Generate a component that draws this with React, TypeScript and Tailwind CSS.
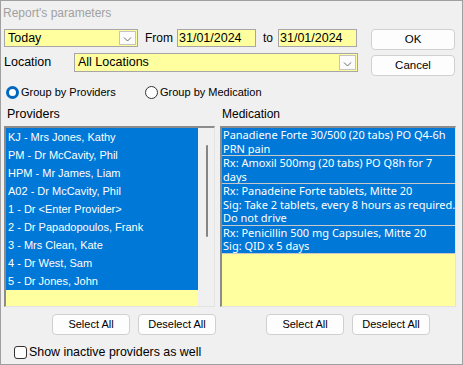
import React from "react";

const providers = [
  "KJ - Mrs Jones, Kathy",
  "PM - Dr McCavity, Phil",
  "HPM - Mr James, Liam",
  "A02 - Dr McCavity, Phil",
  "1 - Dr <Enter Provider>",
  "2 - Dr Papadopoulos, Frank",
  "3 - Mrs Clean, Kate",
  "4 - Dr West, Sam",
  "5 - Dr Jones, John",
];

const medications = [
  ["Panadiene Forte 30/500 (20 tabs) PO Q4-6h", "PRN pain"],
  ["Rx: Amoxil 500mg (20 tabs) PO Q8h for 7", "days"],
  [
    "Rx: Panadeine Forte tablets, Mitte 20",
    "Sig: Take 2 tablets, every 8 hours as required.",
    "Do not drive",
  ],
  ["Rx: Penicillin 500 mg Capsules, Mitte 20", "Sig: QID x 5 days"],
];

const Chevron = () => (
  <svg width="9" height="6" viewBox="0 0 9 6">
    <path d="M1 1.5 L4.5 5 L8 1.5" fill="none" stroke="#6b6b6b" strokeWidth="1" />
  </svg>
);

const Combo = ({ text, className }: { text: string; className: string }) => (
  <div className={`flex border border-[#a6a6a6] bg-[#ffffa0] ${className}`}>
    <span className="flex-1 pl-[3px] flex items-center whitespace-nowrap">{text}</span>
    <span className="w-[17px] my-px mr-px flex items-center justify-center pt-[2px] border border-[#c4c4c4] bg-[#fbfbfb]">
      <Chevron />
    </span>
  </div>
);

const DateBox = ({ value }: { value: string }) => (
  <div className="w-[79px] h-[18px] border border-[#a6a6a6] bg-[#ffffa0] pl-px flex items-center">
    {value}
  </div>
);

const Button = ({ label, className }: { label: string; className: string }) => (
  <div
    className={`flex items-center justify-center border border-[#d0d0d0] rounded-[4px] bg-[#fdfdfd] ${className}`}
  >
    {label}
  </div>
);

const Radio = ({ checked }: { checked: boolean }) => (
  <svg width="13" height="13" viewBox="0 0 13 13">
    {checked ? (
      <>
        <circle cx="6.5" cy="6.5" r="6.5" fill="#0067c0" />
        <circle cx="6.5" cy="6.5" r="3.5" fill="#ffffff" />
      </>
    ) : (
      <circle cx="6.5" cy="6.5" r="6" fill="#ffffff" stroke="#333333" strokeWidth="1" />
    )}
  </svg>
);

export default function App() {
  return (
    <div className="w-[463px] h-[365px] border border-[#a0a0a0] bg-[#f0f0f0] flex flex-col text-[12.5px] text-black font-['Liberation_Sans',sans-serif] leading-none overflow-hidden">
      {/* Title */}
      <div className="h-[28px] pl-[2px] pt-[4px] leading-[16px] text-[12px] text-[#a0a0a0]">
        Report's parameters
      </div>

      {/* Date range / location + OK, Cancel */}
      <div className="flex">
        <div className="pl-[3px] flex flex-col">
          <div className="flex items-center h-[18px]">
            <Combo text="Today" className="w-[134px] h-[18px]" />
            <span className="w-[39px] pl-[7px] text-[12px]">From</span>
            <DateBox value="31/01/2024" />
            <span className="w-[22px] pl-[7px] text-[12px]">to</span>
            <DateBox value="31/01/2024" />
          </div>
          <div className="flex items-center h-[19px] mt-[6px]">
            <span className="w-[70px]">Location</span>
            <Combo text="All Locations" className="w-[284px] h-[19px]" />
          </div>
        </div>
        <div className="ml-auto mr-[7px] flex flex-col gap-[5px] text-[11.5px]">
          <Button label="OK" className="w-[84px] h-[21px]" />
          <Button label="Cancel" className="w-[84px] h-[21px]" />
        </div>
      </div>

      {/* Grouping */}
      <div className="mt-[8px] h-[16px] flex items-center pl-[5px] text-[11px]">
        <div className="w-[139px] flex items-center gap-[2px]">
          <Radio checked />
          <span>Group by Providers</span>
        </div>
        <div className="flex items-center gap-[2px]">
          <Radio checked={false} />
          <span>Group by Medication</span>
        </div>
      </div>

      {/* List captions */}
      <div className="mt-[6px] h-[16px] flex items-center">
        <span className="w-[219px] pl-[6px]">Providers</span>
        <span className="pl-[2px] text-[12px]">Medication</span>
      </div>

      {/* Lists */}
      <div className="mt-[4px] flex pl-[3px] gap-[5px]">
        <div className="w-[211px] h-[181px] flex border-t-2 border-l-2 border-r border-b border-t-[#8c8c8c] border-l-[#8c8c8c] border-r-[#e3e3e3] border-b-[#e3e3e3] bg-[#ffffa0] text-[11px]">
          <div className="w-[192px] flex flex-col">
            {providers.map((p) => (
              <div key={p} className="h-[18px] bg-[#0078d7] text-white pl-[2px] flex items-center whitespace-nowrap">
                {p}
              </div>
            ))}
          </div>
          <div className="w-[16px] bg-[#f0f0f0] pt-[17px]">
            <div className="ml-[8px] w-[2px] h-[92px] rounded-full bg-[#858585]" />
          </div>
        </div>

        <div className="w-[236px] h-[181px] flex flex-col border-t-2 border-l-2 border-r border-b border-t-[#8c8c8c] border-l-[#8c8c8c] border-r-[#e3e3e3] border-b-[#e3e3e3] bg-[#ffffa0] overflow-hidden font-['Noto_Sans',sans-serif] text-[11px]">
          {medications.map((lines, i) => (
            <div
              key={i}
              className="bg-[#0078d7] text-white border-b border-[#c8c8c8] pl-px leading-[13.5px] whitespace-nowrap overflow-hidden"
            >
              {lines.map((l) => (
                <div key={l} className="h-[13.5px]">{l}</div>
              ))}
            </div>
          ))}
        </div>
      </div>

      {/* Select / deselect */}
      <div className="mt-[7px] flex text-[11px]">
        <Button label="Select All" className="ml-[51px] w-[78px] h-[21px]" />
        <Button label="Deselect All" className="ml-[8px] w-[78px] h-[21px]" />
        <Button label="Select All" className="ml-[50px] w-[78px] h-[21px]" />
        <Button label="Deselect All" className="ml-[8px] w-[78px] h-[21px]" />
      </div>

      {/* Inactive providers */}
      <div className="mt-[10px] h-[14px] flex items-center pl-[13px]">
        <span className="w-[13px] h-[13px] border border-[#333333] rounded-[3px] bg-white" />
        <span className="ml-[2px] text-[12.4px]">Show inactive providers as well</span>
      </div>
    </div>
  );
}
